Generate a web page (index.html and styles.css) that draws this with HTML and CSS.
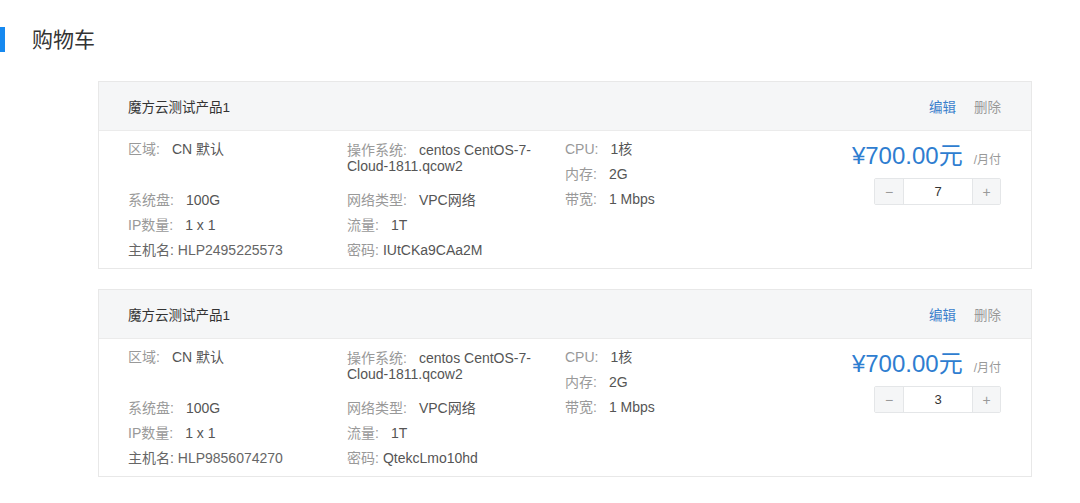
FILE: index.html
```html
<!DOCTYPE html>
<html lang="zh-CN">
<head>
<meta charset="utf-8">
<title>购物车</title>
<link rel="stylesheet" href="styles.css">
</head>
<body>
<div class="page">
  <div class="title-row">
    <span class="bar"></span>
    <h1 class="title">购物车</h1>
  </div>
  <div class="cart-list">
    <div class="card">
      <div class="card-head">
        <span class="prod-name">魔方云测试产品1</span>
        <div class="actions"><a class="edit">编辑</a><a class="del">删除</a></div>
      </div>
      <div class="card-body">
        <div class="col col1">
          <div class="item tall"><span class="lbl">区域:</span><span class="val">CN 默认</span></div>
          <div class="item"><span class="lbl">系统盘:</span><span class="val">100G</span></div>
          <div class="item"><span class="lbl">IP数量:</span><span class="val">1 x 1</span></div>
          <div class="item host">主机名: HLP2495225573</div>
        </div>
        <div class="col col2">
          <div class="item tall os"><span class="lbl">操作系统:</span><span class="val">centos CentOS-7-Cloud-1811.qcow2</span></div>
          <div class="item"><span class="lbl">网络类型:</span><span class="val">VPC网络</span></div>
          <div class="item"><span class="lbl">流量:</span><span class="val">1T</span></div>
          <div class="item"><span class="lbl pw">密码:</span><span class="val">IUtCKa9CAa2M</span></div>
        </div>
        <div class="col col3">
          <div class="item"><span class="lbl">CPU:</span><span class="val">1核</span></div>
          <div class="item"><span class="lbl">内存:</span><span class="val">2G</span></div>
          <div class="item"><span class="lbl">带宽:</span><span class="val">1 Mbps</span></div>
        </div>
        <div class="price-col">
          <div class="price-row"><span class="price">¥700.00元</span><span class="per">/月付</span></div>
          <div class="stepper"><span class="btn">−</span><span class="qty">7</span><span class="btn">+</span></div>
        </div>
      </div>
    </div>
    <div class="card">
      <div class="card-head">
        <span class="prod-name">魔方云测试产品1</span>
        <div class="actions"><a class="edit">编辑</a><a class="del">删除</a></div>
      </div>
      <div class="card-body">
        <div class="col col1">
          <div class="item tall"><span class="lbl">区域:</span><span class="val">CN 默认</span></div>
          <div class="item"><span class="lbl">系统盘:</span><span class="val">100G</span></div>
          <div class="item"><span class="lbl">IP数量:</span><span class="val">1 x 1</span></div>
          <div class="item host">主机名: HLP9856074270</div>
        </div>
        <div class="col col2">
          <div class="item tall os"><span class="lbl">操作系统:</span><span class="val">centos CentOS-7-Cloud-1811.qcow2</span></div>
          <div class="item"><span class="lbl">网络类型:</span><span class="val">VPC网络</span></div>
          <div class="item"><span class="lbl">流量:</span><span class="val">1T</span></div>
          <div class="item"><span class="lbl pw">密码:</span><span class="val">QtekcLmo10hd</span></div>
        </div>
        <div class="col col3">
          <div class="item"><span class="lbl">CPU:</span><span class="val">1核</span></div>
          <div class="item"><span class="lbl">内存:</span><span class="val">2G</span></div>
          <div class="item"><span class="lbl">带宽:</span><span class="val">1 Mbps</span></div>
        </div>
        <div class="price-col">
          <div class="price-row"><span class="price">¥700.00元</span><span class="per">/月付</span></div>
          <div class="stepper"><span class="btn">−</span><span class="qty">3</span><span class="btn">+</span></div>
        </div>
      </div>
    </div>
  </div>
</div>
</body>
</html>
```

FILE: styles.css
```css
* { box-sizing: border-box; }
html, body { margin: 0; padding: 0; background: #fff; }
body {
  font-family: "Liberation Sans", "Noto Sans CJK SC", sans-serif;
  font-size: 14px;
  color: #555;
}
.page { width: 1080px; }
.title-row {
  display: flex;
  align-items: center;
  padding-top: 27px;
  height: 52px;
}
.bar { width: 5px; height: 25px; background: #1689f0; }
.title {
  margin: 0 0 0 27px;
  font-size: 21px;
  font-weight: normal;
  line-height: 25px;
  color: #333;
}
.cart-list {
  margin-top: 29px;
  padding: 0 48px 0 98px;
  display: flex;
  flex-direction: column;
  gap: 20px;
}
.card { border: 1px solid #e8e8e8; background: #fff; }
.card-head {
  height: 49px;
  background: #f5f6f7;
  border-bottom: 1px solid #ebebeb;
  display: flex;
  align-items: center;
  justify-content: space-between;
  padding: 0 30px 0 29px;
}
.prod-name { font-size: 13.5px; color: #333; }
.actions { display: flex; gap: 18px; font-size: 13.5px; }
.edit { color: #3a80cc; }
.del { color: #999; }
.card-body {
  display: flex;
  padding: 6px 30px 5px 29px;
}
.col { display: flex; flex-direction: column; }
.col1 { width: 219px; }
.col2 { width: 218px; }
.col3 { width: 200px; }
.item { line-height: 25px; height: 25px; white-space: nowrap; }
.item.tall { height: 51px; }
.item.os { white-space: normal; line-height: 16px; padding-top: 5px; padding-right: 4px; }
.lbl { color: #999; margin-right: 12px; }
.lbl.pw { margin-right: 4px; }
.val { color: #555; }
.host { color: #666; }
.price-col {
  margin-left: auto;
  padding-top: 7px;
  display: flex;
  flex-direction: column;
  align-items: flex-end;
}
.price-row { display: flex; align-items: baseline; gap: 11px; }
.price { font-size: 24px; line-height: 24px; color: #2e7dd0; }
.per { font-size: 12px; color: #999; }
.stepper {
  margin-top: 10px;
  display: flex;
  height: 27px;
  border: 1px solid #e4e6e8;
  border-radius: 2px;
  overflow: hidden;
}
.btn {
  width: 29px;
  background: #f5f6f7;
  color: #999;
  display: flex;
  align-items: center;
  justify-content: center;
  font-size: 14px;
}
.stepper .btn:first-child { border-right: 1px solid #e4e6e8; }
.stepper .btn:last-child { border-left: 1px solid #e4e6e8; width: 28px; }
.qty {
  width: 68px;
  display: flex;
  align-items: center;
  justify-content: center;
  font-size: 13px;
  color: #333;
}
```
